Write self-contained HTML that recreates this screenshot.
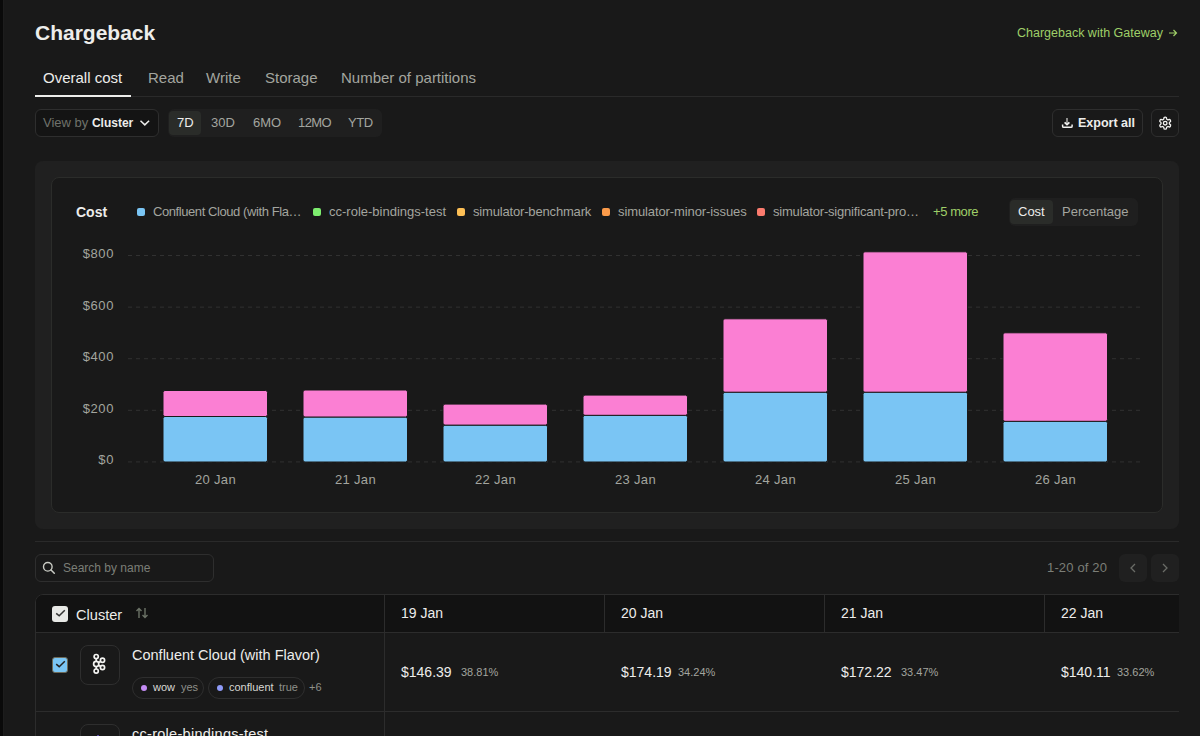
<!DOCTYPE html>
<html><head><meta charset="utf-8">
<style>
*{box-sizing:border-box;margin:0;padding:0}
html,body{width:1200px;height:736px;overflow:hidden;background:#191919;font-family:"Liberation Sans",sans-serif;color:#ededeb}
.abs{position:absolute}
.strip{left:0;top:0;width:3px;height:736px;background:#0a0a0a}
.strip2{left:3px;top:0;width:1px;height:736px;background:#1d1d1d}
.title{left:35px;top:20px;font-size:21px;font-weight:bold;color:#ededeb;line-height:26px;white-space:nowrap}
.link{left:1017px;top:25px;font-size:12.5px;color:#9fcf68;line-height:16px;white-space:nowrap}
.tab{top:69px;font-size:15px;line-height:18px;color:#a3a59f;white-space:nowrap}
.tab.on{color:#ededeb}
.sep{left:35px;width:1144px;height:1px;background:#2a2a2a}
.underline{left:35px;top:95px;width:96px;height:2px;background:#ededeb}
.btn{border:1px solid #2e2e2e;border-radius:6px}
.lsq{top:208px;width:8px;height:8px;border-radius:2px}
.ltx{top:204px;font-size:13px;line-height:16px;color:#a3a59f;white-space:nowrap}
.yl{font-size:13px;fill:#a3a59f;letter-spacing:0.6px}
.xl{font-size:13px;fill:#a3a59f;letter-spacing:0.3px}
.th{top:605px;font-size:14px;line-height:16px;color:#ededeb;white-space:nowrap}
.tag{top:677px;height:22px;border:1px solid #2e2e2e;border-radius:11px}
.dot{top:685px;width:6px;height:6px;border-radius:3px}
.tk{top:681px;font-size:11px;line-height:12px;color:#d8d8d4;white-space:nowrap}
.tv{top:681px;font-size:11px;line-height:12px;color:#8e908a;white-space:nowrap}
.amt{top:664px;font-size:14px;line-height:16px;color:#ededeb;white-space:nowrap}
.pct{top:665px;font-size:11px;line-height:14px;color:#a3a59f;white-space:nowrap}
.t13{font-size:13px;line-height:16px;white-space:nowrap}
</style></head><body>
<div class="abs strip"></div><div class="abs strip2"></div>
<div class="abs title">Chargeback</div>
<div class="abs link">Chargeback with Gateway</div>
<svg class="abs" style="left:1167px;top:28px" width="12" height="10"><path d="M2 5 H9.5 M6.5 2 L9.5 5 L6.5 8" fill="none" stroke="#9fcf68" stroke-width="1.2"/></svg>

<div class="abs tab on" style="left:43px">Overall cost</div>
<div class="abs tab" style="left:148px">Read</div>
<div class="abs tab" style="left:206px">Write</div>
<div class="abs tab" style="left:265px">Storage</div>
<div class="abs tab" style="left:341px">Number of partitions</div>
<div class="abs sep" style="top:96px"></div>
<div class="abs underline"></div>

<!-- view by -->
<div class="abs btn" style="left:35px;top:109px;width:124px;height:28px;background:#141414"></div>
<div class="abs t13" style="left:43px;top:115px;color:#6f726b">View by <b style="color:#ededeb;font-size:12px">Cluster</b></div>
<svg class="abs" style="left:139px;top:119px" width="12" height="8"><path d="M1.5 1.8 L5.8 5.9 L10.1 1.8" fill="none" stroke="#ededeb" stroke-width="1.5"/></svg>

<!-- segmented -->
<div class="abs" style="left:168px;top:109px;width:214px;height:28px;background:#1f1f1f;border-radius:6px"></div>
<div class="abs" style="left:169px;top:111px;width:32px;height:24px;background:#2a2c29;border-radius:4px"></div>
<div class="abs t13" style="left:177px;top:115px;color:#ededeb">7D</div>
<div class="abs t13" style="left:211px;top:115px;color:#a3a59f">30D</div>
<div class="abs t13" style="left:253px;top:115px;color:#a3a59f">6MO</div>
<div class="abs t13" style="left:298px;top:115px;color:#a3a59f;letter-spacing:-0.6px">12MO</div>
<div class="abs t13" style="left:348px;top:115px;color:#a3a59f;letter-spacing:-0.4px">YTD</div>

<!-- export -->
<div class="abs btn" style="left:1052px;top:109px;width:91px;height:28px"></div>
<div class="abs t13" style="left:1078px;top:115px;font-weight:bold;font-size:12.5px">Export all</div>
<div class="abs btn" style="left:1151px;top:109px;width:28px;height:28px"></div>
<svg class="abs" style="left:1058px;top:113px" width="20" height="20"><path d="M4.6 11.5 V13.2 Q4.6 14.3 5.7 14.3 H13 Q14.1 14.3 14.1 13.2 V11.5" fill="none" stroke="#f2f2f0" stroke-width="1.5"/><path d="M9 5 V10.5" stroke="#a8a8a6" stroke-width="1.6"/><path d="M6.6 9.3 L9 11.6 L11.4 9.3" fill="none" stroke="#f2f2f0" stroke-width="1.7"/></svg>
<svg class="abs" style="left:1157.7px;top:115.7px" width="14.4" height="14.4" viewBox="0 0 24 24"><path fill="none" stroke="#f2f2f0" stroke-width="2.2" d="M12.22 2h-.44a2 2 0 0 0-2 2v.18a2 2 0 0 1-1 1.73l-.43.25a2 2 0 0 1-2 0l-.15-.08a2 2 0 0 0-2.730.73l-.22.38a2 2 0 0 0 .73 2.73l.15.1a2 2 0 0 1 1 1.72v.51a2 2 0 0 1-1 1.74l-.15.09a2 2 0 0 0-.73 2.73l.22.38a2 2 0 0 0 2.73.73l.15-.08a2 2 0 0 1 2 0l.43.25a2 2 0 0 1 1 1.73V20a2 2 0 0 0 2 2h.44a2 2 0 0 0 2-2v-.18a2 2 0 0 1 1-1.73l.43-.25a2 2 0 0 1 2 0l.15.08a2 2 0 0 0 2.73-.73l.22-.39a2 2 0 0 0-.73-2.73l-.15-.08a2 2 0 0 1-1-1.74v-.5a2 2 0 0 1 1-1.74l.15-.09a2 2 0 0 0 .73-2.730l-.22-.38a2 2 0 0 0-2.73-.73l-.15.08a2 2 0 0 1-2 0l-.43-.25a2 2 0 0 1-1-1.73V4a2 2 0 0 0-2-2z"/><circle cx="12" cy="12" r="3" fill="none" stroke="#f2f2f0" stroke-width="2.2"/></svg>

<!-- chart card -->
<div class="abs" style="left:35px;top:161px;width:1144px;height:368px;background:#202020;border-radius:8px"></div>
<div class="abs" style="left:51px;top:177px;width:1112px;height:336px;background:#191919;border:1px solid #2b2c2a;border-radius:8px"></div>


<!-- legend -->
<div class="abs" style="left:76px;top:204px;font-size:14px;font-weight:bold;line-height:16px;color:#ededeb">Cost</div>
<div class="abs lsq" style="left:137px;background:#7ac5f4"></div>
<div class="abs ltx" style="left:153px;letter-spacing:-0.42px">Confluent Cloud (with Fla…</div>
<div class="abs lsq" style="left:313px;background:#7ded6e"></div>
<div class="abs ltx" style="left:329px">cc-role-bindings-test</div>
<div class="abs lsq" style="left:457px;background:#fdbf55"></div>
<div class="abs ltx" style="left:473px;letter-spacing:-0.17px">simulator-benchmark</div>
<div class="abs lsq" style="left:602px;background:#fb9b4a"></div>
<div class="abs ltx" style="left:618px;letter-spacing:-0.1px">simulator-minor-issues</div>
<div class="abs lsq" style="left:757px;background:#fb7b6e"></div>
<div class="abs ltx" style="left:773px;letter-spacing:-0.2px">simulator-significant-pro…</div>
<div class="abs ltx" style="left:933px;color:#9fcf68;letter-spacing:-0.42px">+5 more</div>
<!-- toggle -->
<div class="abs" style="left:1009px;top:198px;width:129px;height:28px;background:#1f1f1f;border-radius:6px"></div>
<div class="abs" style="left:1010px;top:200px;width:43px;height:24px;background:#2a2c29;border-radius:4px"></div>
<div class="abs t13" style="left:1018px;top:204px;color:#ededeb">Cost</div>
<div class="abs t13" style="left:1062px;top:204px;color:#a3a59f">Percentage</div>
<svg class="abs" style="left:0;top:0" width="1200" height="736">
<line x1="128" y1="255.5" x2="1140" y2="255.5" stroke="#313131" stroke-width="1" stroke-dasharray="4 4"/>
<line x1="128" y1="307.1" x2="1140" y2="307.1" stroke="#313131" stroke-width="1" stroke-dasharray="4 4"/>
<line x1="128" y1="358.7" x2="1140" y2="358.7" stroke="#313131" stroke-width="1" stroke-dasharray="4 4"/>
<line x1="128" y1="410.3" x2="1140" y2="410.3" stroke="#313131" stroke-width="1" stroke-dasharray="4 4"/>
<line x1="128" y1="461.9" x2="1140" y2="461.9" stroke="#313131" stroke-width="1" stroke-dasharray="4 4"/>
<text x="114" y="258.0" text-anchor="end" class="yl">$800</text>
<text x="114" y="309.6" text-anchor="end" class="yl">$600</text>
<text x="114" y="361.2" text-anchor="end" class="yl">$400</text>
<text x="114" y="412.8" text-anchor="end" class="yl">$200</text>
<text x="114" y="464.4" text-anchor="end" class="yl">$0</text>
<rect x="163" y="416.5" width="104.5" height="45.5" rx="2" fill="#7ac5f4" stroke="#191919" stroke-width="1"/>
<rect x="163" y="390.5" width="104.5" height="26.0" rx="2" fill="#fb7fd3" stroke="#191919" stroke-width="1"/>
<text x="215.5" y="484" text-anchor="middle" class="xl">20 Jan</text>
<rect x="303" y="417.0" width="104.5" height="45.0" rx="2" fill="#7ac5f4" stroke="#191919" stroke-width="1"/>
<rect x="303" y="390.0" width="104.5" height="27.0" rx="2" fill="#fb7fd3" stroke="#191919" stroke-width="1"/>
<text x="355.5" y="484" text-anchor="middle" class="xl">21 Jan</text>
<rect x="443" y="425.1" width="104.5" height="36.9" rx="2" fill="#7ac5f4" stroke="#191919" stroke-width="1"/>
<rect x="443" y="404.1" width="104.5" height="21.0" rx="2" fill="#fb7fd3" stroke="#191919" stroke-width="1"/>
<text x="495.5" y="484" text-anchor="middle" class="xl">22 Jan</text>
<rect x="583" y="415.3" width="104.5" height="46.7" rx="2" fill="#7ac5f4" stroke="#191919" stroke-width="1"/>
<rect x="583" y="395.1" width="104.5" height="20.2" rx="2" fill="#fb7fd3" stroke="#191919" stroke-width="1"/>
<text x="635.5" y="484" text-anchor="middle" class="xl">23 Jan</text>
<rect x="723" y="392.2" width="104.5" height="69.8" rx="2" fill="#7ac5f4" stroke="#191919" stroke-width="1"/>
<rect x="723" y="318.8" width="104.5" height="73.4" rx="2" fill="#fb7fd3" stroke="#191919" stroke-width="1"/>
<text x="775.5" y="484" text-anchor="middle" class="xl">24 Jan</text>
<rect x="863" y="392.2" width="104.5" height="69.8" rx="2" fill="#7ac5f4" stroke="#191919" stroke-width="1"/>
<rect x="863" y="251.8" width="104.5" height="140.4" rx="2" fill="#fb7fd3" stroke="#191919" stroke-width="1"/>
<text x="915.5" y="484" text-anchor="middle" class="xl">25 Jan</text>
<rect x="1003" y="421.3" width="104.5" height="40.7" rx="2" fill="#7ac5f4" stroke="#191919" stroke-width="1"/>
<rect x="1003" y="332.8" width="104.5" height="88.5" rx="2" fill="#fb7fd3" stroke="#191919" stroke-width="1"/>
<text x="1055.5" y="484" text-anchor="middle" class="xl">26 Jan</text>
</svg>
<div class="abs sep" style="top:541px"></div>

<!-- search -->
<div class="abs btn" style="left:35px;top:554px;width:179px;height:28px"></div>
<svg class="abs" style="left:42px;top:561px" width="14" height="14" viewBox="0 0 14 14"><circle cx="5.8" cy="5.8" r="4.3" fill="none" stroke="#c9cbc4" stroke-width="1.4"/><line x1="9" y1="9" x2="12.3" y2="12.3" stroke="#c9cbc4" stroke-width="1.5" stroke-linecap="round"/></svg>
<div class="abs" style="left:63px;top:561px;font-size:12px;line-height:14px;color:#7b7e77;white-space:nowrap">Search by name</div>
<!-- pagination -->
<div class="abs" style="left:1047px;top:561px;font-size:13px;letter-spacing:0.15px;line-height:14px;color:#7b7e77;white-space:nowrap">1-20 of 20</div>
<div class="abs" style="left:1119px;top:554px;width:28px;height:28px;background:#202020;border-radius:6px"></div>
<div class="abs" style="left:1151px;top:554px;width:28px;height:28px;background:#202020;border-radius:6px"></div>
<svg class="abs" style="left:1119px;top:554px" width="60" height="28"><path d="M16 10 L12 14 L16 18" fill="none" stroke="#6a6c67" stroke-width="1.3"/><path d="M44 10 L48 14 L44 18" fill="none" stroke="#6a6c67" stroke-width="1.3"/></svg>

<!-- table -->
<div class="abs" style="left:35px;top:594px;width:1144px;height:142px;overflow:hidden;border-top-left-radius:8px">
  <div class="abs" style="left:0;top:0;width:1400px;height:300px;border:1px solid #2c2c2c;border-top-left-radius:8px">
  </div>
  <div class="abs" style="left:1px;top:1px;width:1400px;height:37px;background:#121212;border-top-left-radius:7px"></div>
  <div class="abs" style="left:0;top:38px;width:1400px;height:1px;background:#2c2c2c"></div>
  <div class="abs" style="left:0;top:117px;width:1400px;height:1px;background:#2c2c2c"></div>
  <div class="abs" style="left:349px;top:0;width:1px;height:300px;background:#2c2c2c"></div>
  <div class="abs" style="left:569px;top:0;width:1px;height:38px;background:#2c2c2c"></div>
  <div class="abs" style="left:789px;top:0;width:1px;height:38px;background:#2c2c2c"></div>
  <div class="abs" style="left:1009px;top:0;width:1px;height:38px;background:#2c2c2c"></div>
</div>
<!-- header cells -->
<div class="abs" style="left:52px;top:606px;width:16px;height:16px;background:#e8e9e6;border-radius:3px"></div>
<svg class="abs" style="left:52px;top:606px" width="16" height="16"><path d="M4.2 7.3 L7.2 9.8 L12.8 4.3" fill="none" stroke="#333" stroke-width="1.5"/></svg>
<div class="abs th" style="left:76px;top:607px;font-size:14.6px">Cluster</div>
<svg class="abs" style="left:135px;top:606px" width="14" height="14" viewBox="0 0 14 14"><path d="M4 12 V2.5 M1.5 5 L4 2.5 L6.5 5" fill="none" stroke="#6b7266" stroke-width="1.4"/><path d="M10 2 V11.5 M7.5 9 L10 11.5 L12.5 9" fill="none" stroke="#6b7266" stroke-width="1.4"/></svg>
<div class="abs th" style="left:401px">19 Jan</div>
<div class="abs th" style="left:621px">20 Jan</div>
<div class="abs th" style="left:841px">21 Jan</div>
<div class="abs th" style="left:1061px">22 Jan</div>

<!-- row 1 -->
<div class="abs" style="left:52px;top:657px;width:16px;height:16px;background:#7ac5f4;border:1px solid #6e6a58;border-radius:3px"></div>
<svg class="abs" style="left:52px;top:657px" width="16" height="16"><path d="M4.2 7.2 L7.2 9.7 L12.8 4.3" fill="none" stroke="#222" stroke-width="1.5"/></svg>
<div class="abs" style="left:80px;top:645px;width:40px;height:40px;border:1px solid #2e2e2e;border-radius:8px"></div>
<svg class="abs" style="left:80px;top:645px" width="40" height="40">
 <g fill="none" stroke="#f4f4f2" stroke-width="1.7">
  <line x1="16.2" y1="11.6" x2="16.2" y2="26.1"/>
  <line x1="16.2" y1="18.9" x2="22.5" y2="15.3"/>
  <line x1="16.2" y1="18.9" x2="22.5" y2="22.5"/>
  <circle cx="16.2" cy="11.6" r="2.1" fill="#191919"/>
  <circle cx="16.2" cy="26.1" r="2.1" fill="#191919"/>
  <circle cx="22.5" cy="15.3" r="2.1" fill="#191919"/>
  <circle cx="22.5" cy="22.5" r="2.1" fill="#191919"/>
  <circle cx="16.2" cy="18.9" r="2.6" fill="#191919"/>
 </g>
</svg>
<div class="abs" style="left:132px;top:647px;font-size:14.5px;line-height:16px;color:#ededeb;white-space:nowrap">Confluent Cloud (with Flavor)</div>
<div class="abs tag" style="left:132px;width:72px"></div>
<div class="abs dot" style="left:141px;background:#c48cf4"></div>
<div class="abs tk" style="left:153px">wow</div><div class="abs tv" style="left:181px">yes</div>
<div class="abs tag" style="left:208px;width:97px"></div>
<div class="abs dot" style="left:217px;background:#8f9bf8"></div>
<div class="abs tk" style="left:229px">confluent</div><div class="abs tv" style="left:279px">true</div>
<div class="abs tv" style="left:309px">+6</div>

<div class="abs amt" style="left:401px">$146.39</div><div class="abs pct" style="left:461px">38.81%</div>
<div class="abs amt" style="left:621px">$174.19</div><div class="abs pct" style="left:678px">34.24%</div>
<div class="abs amt" style="left:841px">$172.22</div><div class="abs pct" style="left:901px">33.47%</div>
<div class="abs amt" style="left:1061px">$140.11</div><div class="abs pct" style="left:1117px">33.62%</div>

<!-- row 2 -->
<div class="abs" style="left:80px;top:724px;width:40px;height:40px;border:1px solid #2e2e2e;border-radius:8px"></div>
<div class="abs" style="left:132px;top:726px;font-size:14.5px;line-height:16px;color:#ededeb;white-space:nowrap;letter-spacing:0.28px">cc-role-bindings-test</div>
<div class="abs" style="left:97px;top:735px;width:2px;height:1px;background:#5a4aa8"></div>

</body></html>
